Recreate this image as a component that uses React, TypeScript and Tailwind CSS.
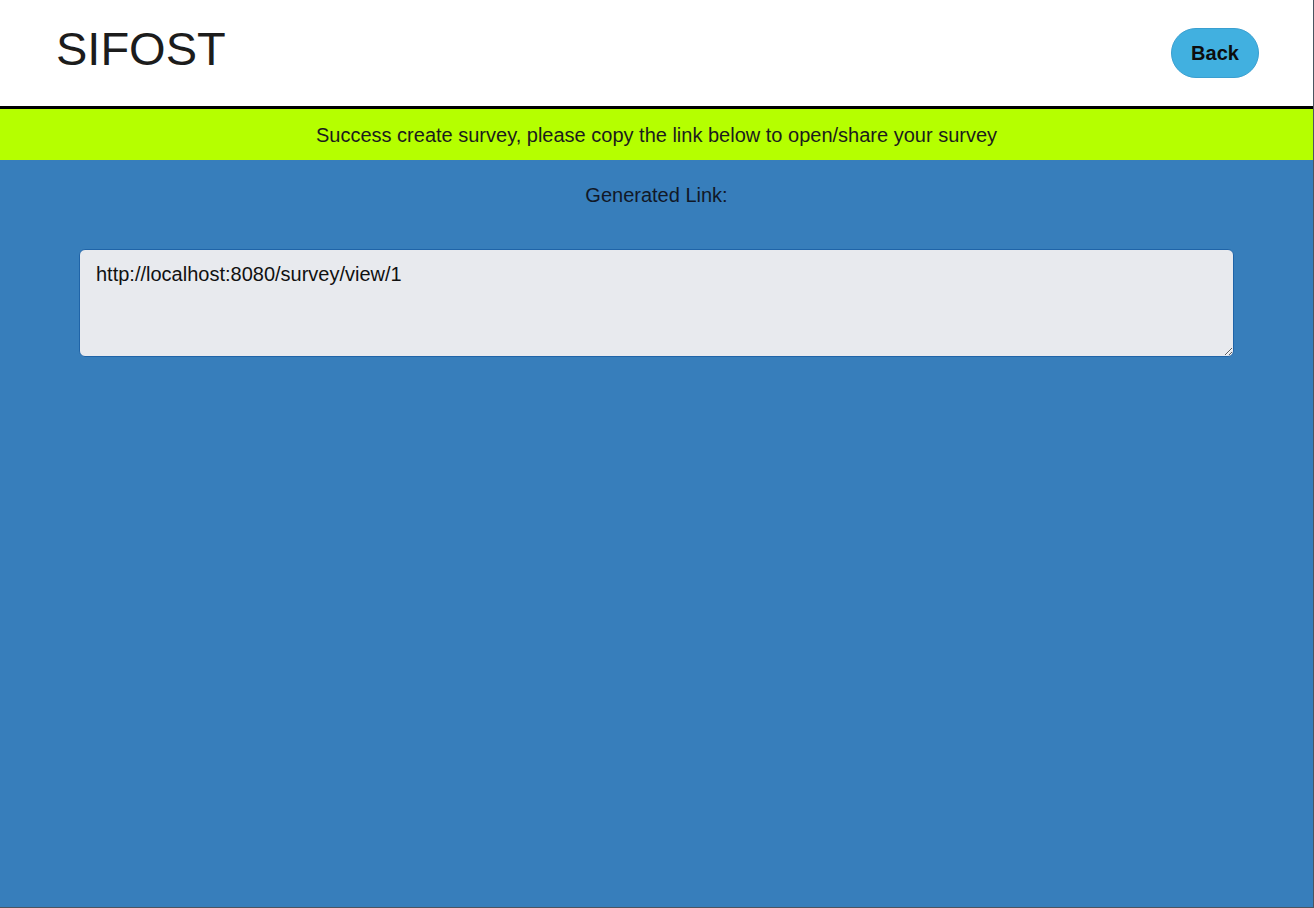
const App = () => {
    return (
        <div className="flex flex-col h-[908px] w-[1314px] border-r border-b border-[#4a5560] bg-[#377ebb] font-['Liberation_Sans',Arial,sans-serif] overflow-hidden">
            <header className="flex flex-row items-center justify-between h-[109px] bg-white border-b-[3px] border-black pl-[56px] pr-[54px]">
                <h1 className="text-[47px] leading-none text-[#1c1c1c] -mt-[10px]">SIFOST</h1>
                <button className="h-[50px] w-[88px] rounded-full bg-[#41b0e0] border border-[#3a9fd0] text-[20px] font-bold text-[#0d0d0d] -mt-[1px]">
                    Back
                </button>
            </header>

            <div className="flex items-center justify-center h-[51px] bg-[#b5ff00] text-[20px] text-[#1c1c1c]">
                Success create survey, please copy the link below to open/share your survey
            </div>

            <main className="flex flex-col flex-1 items-center">
                <p className="mt-[23px] text-[20px] leading-[24px] text-[#111827]">Generated Link:</p>
                <textarea
                    readOnly
                    defaultValue="http://localhost:8080/survey/view/1"
                    className="mt-[42px] h-[108px] w-[1155px] rounded-[6px] border border-[#1f64a8] bg-[#e8eaee] px-[16px] py-[12px] text-[20px] leading-[24px] text-[#111] outline-none"
                />
            </main>
        </div>
    );
};

export default App;
